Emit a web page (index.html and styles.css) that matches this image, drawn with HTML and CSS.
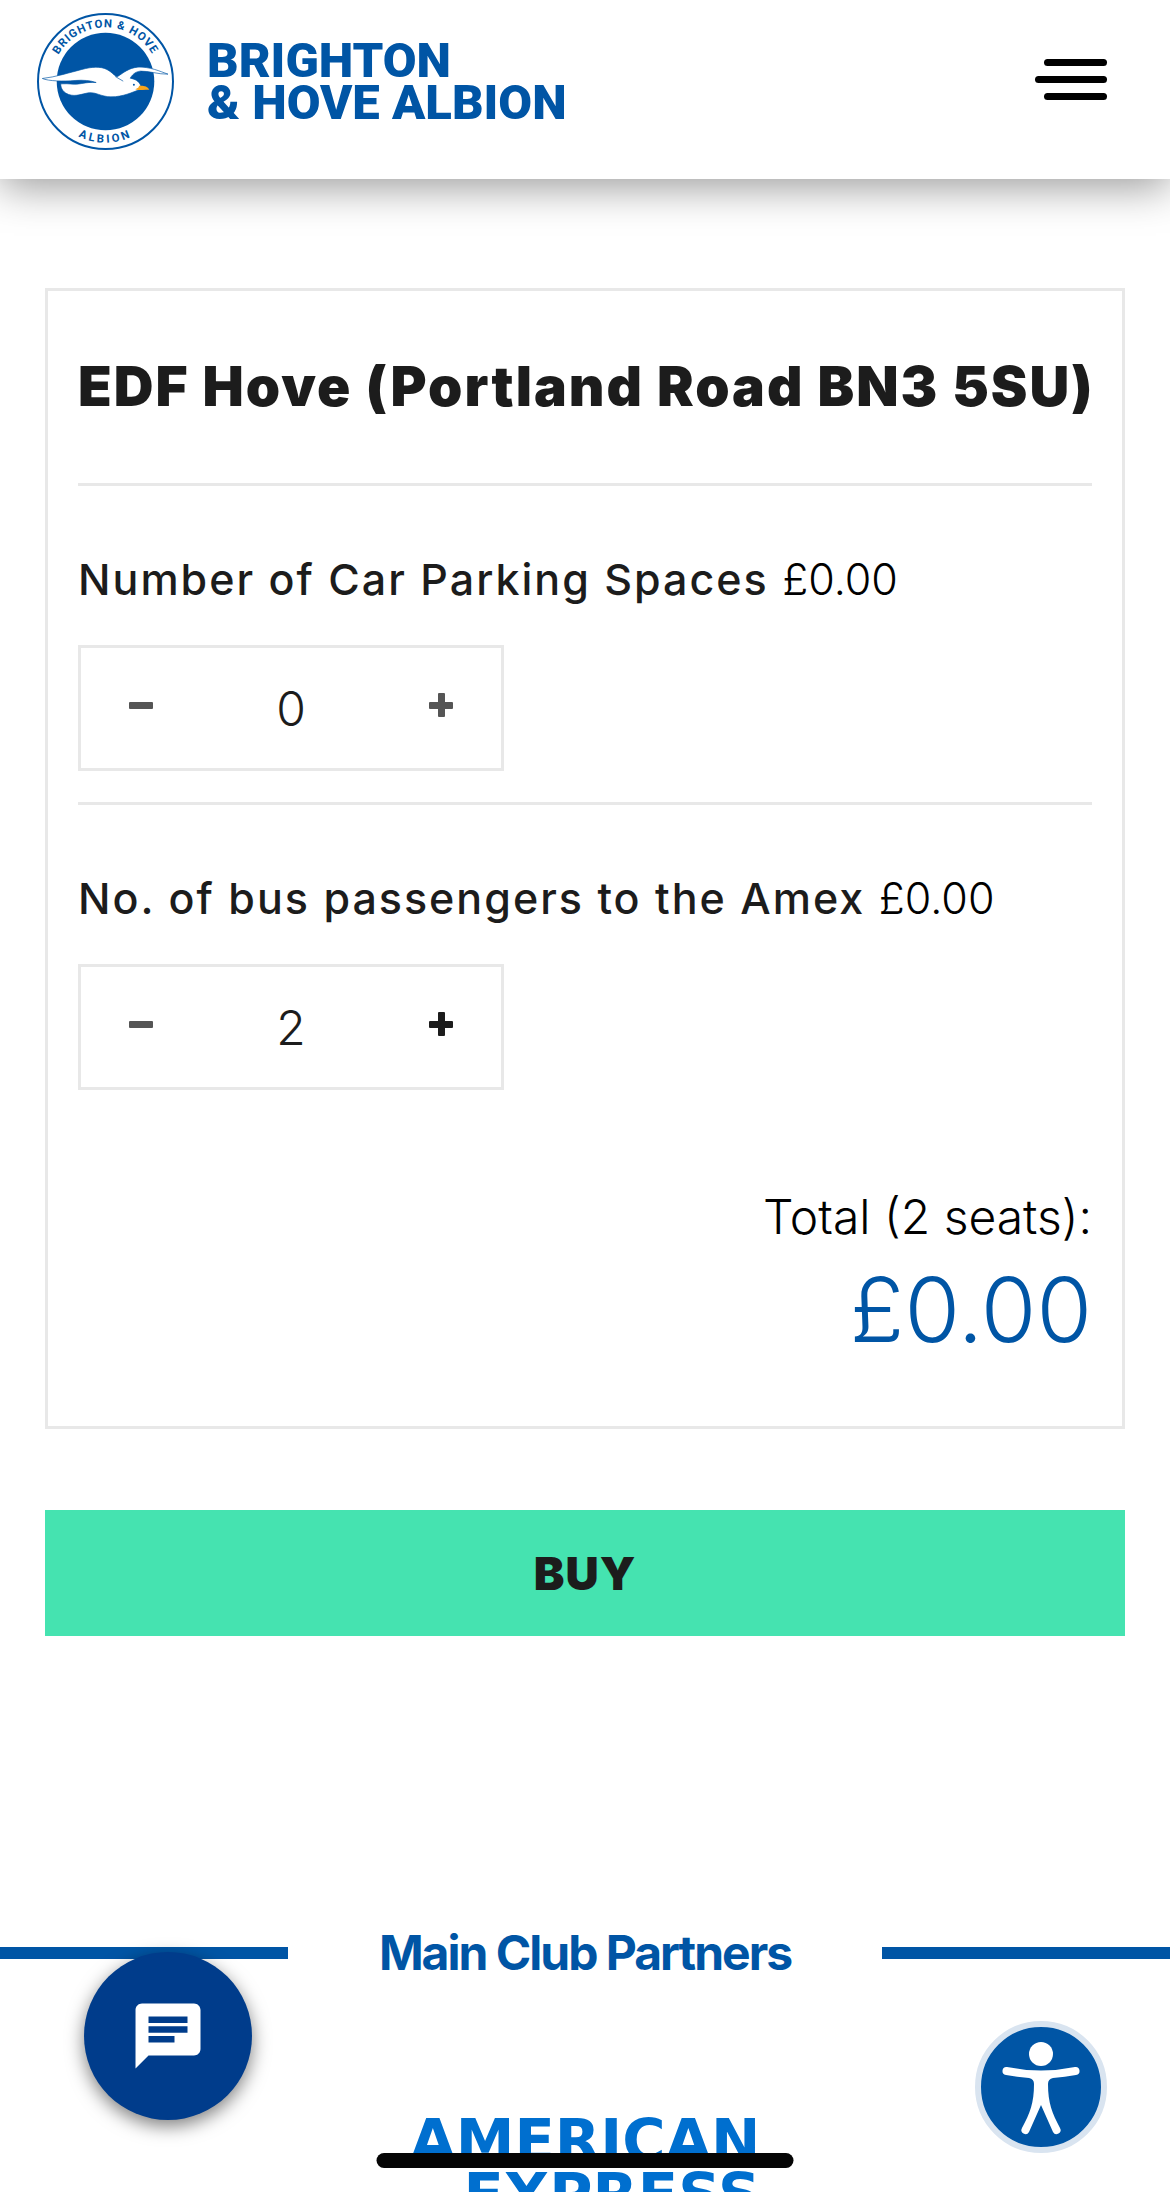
FILE: index.html
```html
<!DOCTYPE html>
<html lang="en">

<head>
    <meta charset="UTF-8">
    <meta name="viewport" content="width=device-width, initial-scale=1.0">
    <title>Brighton &amp; Hove Albion - Tickets</title>
    <link rel="stylesheet" href="styles.css">
</head>

<body>
    <header class="site-header">
        <a class="brand" href="#">
            <!-- club crest -->
            <svg class="crest" viewBox="48 36 416 416" aria-hidden="true">
                <defs>
                    <path id="crest-top" d="M94 244a162 162 0 0 1 324 0" />
                    <path id="crest-bottom" d="M73 244a183 183 0 0 0 366 0" />
                </defs>
                <circle cx="256" cy="244" r="202" fill="#fff" stroke="#0055a5" stroke-width="6" />
                <circle cx="256" cy="244" r="146" fill="#0055a5" />
                <text class="crest-text"><textPath href="#crest-top" startOffset="50%">BRIGHTON &amp; HOVE</textPath></text>
                <text class="crest-text wide"><textPath href="#crest-bottom" startOffset="50%">ALBION</textPath></text>
                <path fill="#fff" stroke="#0055a5" stroke-width="2" d="M67 235C105 231 150 217 185 208C215 200 240 198 260 208C275 215 280 225 291 230C312 216 326 204 352 201C388 199 420 214 443 222C415 223 385 212 360 213C343 215 335 226 330 234C345 237 355 242 361 255L360 268C335 276 310 290 272 290C240 289 228 275 205 278C185 281 168 290 146 283C130 277 122 266 122 251C148 249 165 255 185 250C200 247 213 246 228 247C210 241 190 239 165 241C130 244 85 243 67 235Z" />
                <path fill="none" stroke="#0055a5" stroke-width="2" d="M285 229L309 243" />
                <circle cx="341" cy="254" r="3" fill="#0055a5" />
                <path fill="#f9a51a" d="M356 257C370 256 382 258 387 269C375 269 358 271 345 267C352 265 357 262 356 257Z" />
            </svg>
            <span class="brand-name">BRIGHTON<br>&amp; HOVE ALBION</span>
        </a>
        <button class="menu-btn" type="button" aria-label="Menu">
            <span></span>
            <span class="long"></span>
            <span></span>
        </button>
    </header>

    <main>
        <form class="ticket-form">
            <section class="card">
                <h1 class="card-title">EDF Hove (Portland Road BN3 5SU)</h1>

                <div class="item">
                    <div class="item-name"><label for="parking">Number of Car Parking Spaces</label> <span class="item-price">£0.00</span></div>
                    <div class="stepper">
                        <button type="button" aria-label="Fewer parking spaces"><svg viewBox="0 0 24 24"><rect y="9" width="24" height="7" rx="1" /></svg></button>
                        <input id="parking" type="text" inputmode="numeric" value="0">
                        <button type="button" aria-label="More parking spaces"><svg viewBox="0 0 24 24"><rect y="9" width="24" height="7" rx="1" /><rect x="9" width="7" height="24" rx="1" /></svg></button>
                    </div>
                </div>

                <div class="item">
                    <div class="item-name"><label for="bus">No. of bus passengers to the Amex</label> <span class="item-price">£0.00</span></div>
                    <div class="stepper">
                        <button type="button" aria-label="Fewer passengers"><svg viewBox="0 0 24 24"><rect y="9" width="24" height="7" rx="1" /></svg></button>
                        <input id="bus" type="text" inputmode="numeric" value="2">
                        <button class="active" type="button" aria-label="More passengers"><svg viewBox="0 0 24 24"><rect y="9" width="24" height="7" rx="1" /><rect x="9" width="7" height="24" rx="1" /></svg></button>
                    </div>
                </div>

                <div class="total">
                    <p>Total (2 seats):</p>
                    <p class="total-price">£0.00</p>
                </div>
            </section>

            <button class="buy-btn" type="submit">BUY</button>
        </form>

        <section class="partners">
            <h2 class="partners-title">Main Club Partners</h2>
            <a class="amex" href="#">AMERICAN<br>EXPRESS</a>
        </section>
    </main>

    <!-- floating buttons -->
    <button class="chat-btn" type="button" aria-label="Chat">
        <svg viewBox="0 0 24 24"><path d="M20 2H4c-1.1 0-1.99.9-1.99 2L2 22l4-4h14c1.1 0 2-.9 2-2V4c0-1.1-.9-2-2-2zM6 9h12v2H6V9zm8 5H6v-2h8v2zm4-6H6V6h12v2z" /></svg>
    </button>
    <button class="access-btn" type="button" aria-label="Accessibility options">
        <svg viewBox="0 0 120 120">
            <circle cx="60" cy="27" r="12" />
            <path d="M26 40Q60 47 94 40A4 4 0 0 1 95 48Q84 50 72 51Q67 52 67 57C67 76 71 86 79 101A4 4 0 0 1 72 105L60 78L48 105A4 4 0 0 1 41 101C49 86 53 76 53 57Q53 52 48 51Q36 50 25 48A4 4 0 0 1 26 40Z" />
        </svg>
    </button>
    <div class="home-bar"></div>
</body>

</html>
```

FILE: styles.css
```css
* {
    box-sizing: border-box;
}

body {
    margin: 0;
    height: 100vh;
    overflow: hidden;
    background-color: #fff;
    color: #1c1c1c;
    font-family: Inter, "Liberation Sans", sans-serif;
}

button,
input {
    margin: 0;
    padding: 0;
    border: 0;
    background: none;
    color: inherit;
    font-family: inherit;
}

button {
    cursor: pointer;
}

h1,
h2,
p {
    margin: 0;
}

/* header */
.site-header {
    display: flex;
    justify-content: space-between;
    align-items: flex-start;
    height: 179px;
    padding: 12px 63px 0 36px;
    background-color: #fff;
    box-shadow: 0 8px 40px rgba(0, 0, 0, 0.4);
}

.brand {
    display: flex;
    align-items: center;
    gap: 32px;
    color: #0055a5;
    text-decoration: none;
}

.crest {
    display: block;
    width: 139px;
    height: 139px;
}

.crest-text {
    fill: #0055a5;
    font-family: Roboto, sans-serif;
    font-size: 34px;
    font-weight: 700;
    letter-spacing: 3px;
    text-anchor: middle;
}

.crest-text.wide {
    letter-spacing: 8px;
}

.brand-name {
    font-family: Roboto, sans-serif;
    font-size: 49px;
    font-weight: 900;
    line-height: 42px;
}

.menu-btn {
    display: flex;
    flex-direction: column;
    align-items: flex-end;
    gap: 10px;
    margin-top: 47px;
}

.menu-btn span {
    width: 63px;
    height: 7px;
    border-radius: 4px;
    background-color: #000;
}

.menu-btn .long {
    width: 72px;
}

/* order card */
.ticket-form {
    padding: 109px 45px 0;
}

.card {
    padding: 0 30px 53px;
    border: 3px solid #e8e8e8;
}

.card-title {
    overflow: hidden;
    padding: 60px 0 62px;
    font-size: 55px;
    font-weight: 900;
    line-height: 70px;
    letter-spacing: 2px;
    white-space: nowrap;
}

.item {
    padding: 66px 0 31px;
    border-top: 3px solid #e8e8e8;
}

.item-name {
    font-size: 43px;
    font-weight: 500;
    line-height: 54px;
    letter-spacing: 2px;
}

.item-price {
    color: #000;
    font-weight: 300;
    letter-spacing: 0;
}

.stepper {
    display: flex;
    width: 426px;
    height: 126px;
    margin-top: 39px;
    border: 3px solid #e8e8e8;
}

.stepper button {
    display: flex;
    flex: 0 0 120px;
    align-items: center;
    justify-content: center;
    padding-bottom: 6px;
}

.stepper svg {
    width: 24px;
    height: 24px;
    fill: #555;
}

.stepper .active svg {
    fill: #1c1c1c;
}

.stepper input {
    flex: 1;
    min-width: 0;
    font-size: 48px;
    font-weight: 300;
    text-align: center;
}

.total {
    padding-top: 66px;
    color: #000;
    font-size: 48px;
    font-weight: 300;
    line-height: 60px;
    text-align: right;
}

.total-price {
    color: #0055a5;
    font-size: 90px;
    line-height: 126px;
}

.buy-btn {
    display: block;
    width: 100%;
    height: 126px;
    margin-top: 81px;
    background-color: #45e3b0;
    font-size: 46px;
    font-weight: 900;
    letter-spacing: 1px;
}

/* partners */
.partners {
    margin-top: 282px;
}

.partners-title {
    display: flex;
    align-items: center;
    justify-content: space-between;
    color: #0055a5;
    font-size: 48px;
    font-weight: 700;
    line-height: 70px;
    letter-spacing: -2px;
}

.partners-title::before,
.partners-title::after {
    content: "";
    width: 288px;
    height: 12px;
    background-color: #0055a5;
}

.amex {
    display: block;
    width: 351px;
    margin: 126px auto 0;
    color: #006fcf;
    font-family: "DejaVu Sans", sans-serif;
    font-size: 59px;
    font-weight: 700;
    line-height: 54px;
    text-align: right;
    text-decoration: none;
}

/* floating buttons */
.chat-btn,
.access-btn {
    position: fixed;
    display: flex;
    align-items: center;
    justify-content: center;
    border-radius: 50%;
}

.chat-btn svg,
.access-btn svg {
    fill: #fff;
}

.chat-btn {
    left: 84px;
    bottom: 72px;
    width: 168px;
    height: 168px;
    background-color: #003c8b;
    box-shadow: 0 6px 18px rgba(0, 0, 0, 0.5);
}

.chat-btn svg {
    width: 78px;
    height: 78px;
}

.access-btn {
    right: 63px;
    bottom: 39px;
    width: 132px;
    height: 132px;
    border: 6px solid #d9e4f0;
    background-color: #0055a5;
}

.access-btn svg {
    width: 120px;
    height: 120px;
}

.home-bar {
    position: fixed;
    bottom: 24px;
    left: 50%;
    width: 417px;
    height: 15px;
    border-radius: 8px;
    background-color: #050505;
    transform: translateX(-50%);
}
```
